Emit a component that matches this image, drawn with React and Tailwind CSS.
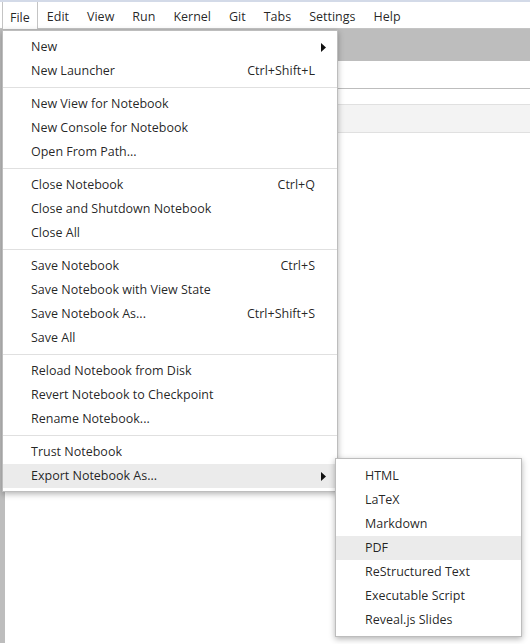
import React from 'react';

const font = { fontFamily: '"Open Sans", "Noto Sans", sans-serif' };

const menuBar = ['File', 'Edit', 'View', 'Run', 'Kernel', 'Git', 'Tabs', 'Settings', 'Help'];

const fileMenu = [
  [
    { label: 'New', sub: true },
    { label: 'New Launcher', keys: 'Ctrl+Shift+L' },
  ],
  [
    { label: 'New View for Notebook' },
    { label: 'New Console for Notebook' },
    { label: 'Open From Path...' },
  ],
  [
    { label: 'Close Notebook', keys: 'Ctrl+Q' },
    { label: 'Close and Shutdown Notebook' },
    { label: 'Close All' },
  ],
  [
    { label: 'Save Notebook', keys: 'Ctrl+S' },
    { label: 'Save Notebook with View State' },
    { label: 'Save Notebook As...', keys: 'Ctrl+Shift+S' },
    { label: 'Save All' },
  ],
  [
    { label: 'Reload Notebook from Disk' },
    { label: 'Revert Notebook to Checkpoint' },
    { label: 'Rename Notebook...' },
  ],
  [
    { label: 'Trust Notebook' },
    { label: 'Export Notebook As...', sub: true, active: true },
  ],
];

const exportMenu = ['HTML', 'LaTeX', 'Markdown', 'PDF', 'ReStructured Text', 'Executable Script', 'Reveal.js Slides'];

function Arrow() {
  return (
    <svg width="5" height="9" viewBox="0 0 5 9" className="block">
      <path d="M0 0 L5 4.5 L0 9 Z" fill="#111" />
    </svg>
  );
}

function MenuItem({ item }) {
  return (
    <div className={`flex h-6 items-center pl-[28px] pr-[11px] ${item.active ? 'bg-[#ebebeb]' : ''}`}>
      <span className="flex-1 whitespace-nowrap">{item.label}</span>
      {item.keys && <span className="whitespace-nowrap">{item.keys}</span>}
      <span className="flex w-[11px] justify-end">{item.sub && <Arrow />}</span>
    </div>
  );
}

export default function App() {
  return (
    <div className="relative h-[644px] w-[530px] overflow-hidden bg-white text-[12.5px] text-[rgba(0,0,0,0.87)]" style={font}>
      <div className="h-[2px] bg-[#d3dae8]" />
      <div className="flex h-[27px] items-stretch border-b border-[#c4c4c4] bg-white pl-[2px]">
        {menuBar.map((name, i) => (
          <div
            key={name}
            className={`flex items-center pt-[5px] ${i === 0 ? '-mb-px border-x border-[#c4c4c4] bg-white px-[7px]' : 'px-[9px]'}`}
          >
            {name}
          </div>
        ))}
      </div>

      <div className="flex h-[614px]">
        <div className="w-[5px] bg-[#bdbdbd]" />
        <div className="flex flex-1 flex-col">
          <div className="h-[32px] bg-[#bdbdbd]" />
          <div className="h-[28px] border-b border-[#bdbdbd] bg-white" />
          <div className="h-[16px] border-b border-[#e0e0e0] bg-white" />
          <div className="h-[28px] border-b border-[#e0e0e0] bg-[#f3f3f3]" />
          <div className="flex-1 bg-white" />
        </div>
      </div>

      <div className="absolute left-[2px] top-[30px] w-[336px] border border-[#bdbdbd] bg-white pt-[4px] pb-[3px] shadow-[0_2px_6px_rgba(0,0,0,0.3)]">
        {fileMenu.map((group, gi) => (
          <div key={gi} className={gi > 0 ? 'mt-1 border-t border-[#e0e0e0] pt-1' : ''}>
            {group.map((item) => (
              <MenuItem key={item.label} item={item} />
            ))}
          </div>
        ))}
      </div>

      <div className="absolute left-[335px] top-[458px] w-[187px] border border-[#bdbdbd] bg-white pt-[5px] pb-[4px] shadow-[0_2px_6px_rgba(0,0,0,0.3)]">
        {exportMenu.map((label) => (
          <div
            key={label}
            className={`flex h-6 items-center whitespace-nowrap pl-[29px] ${label === 'PDF' ? 'bg-[#ebebeb]' : ''}`}
          >
            {label}
          </div>
        ))}
      </div>
    </div>
  );
}
